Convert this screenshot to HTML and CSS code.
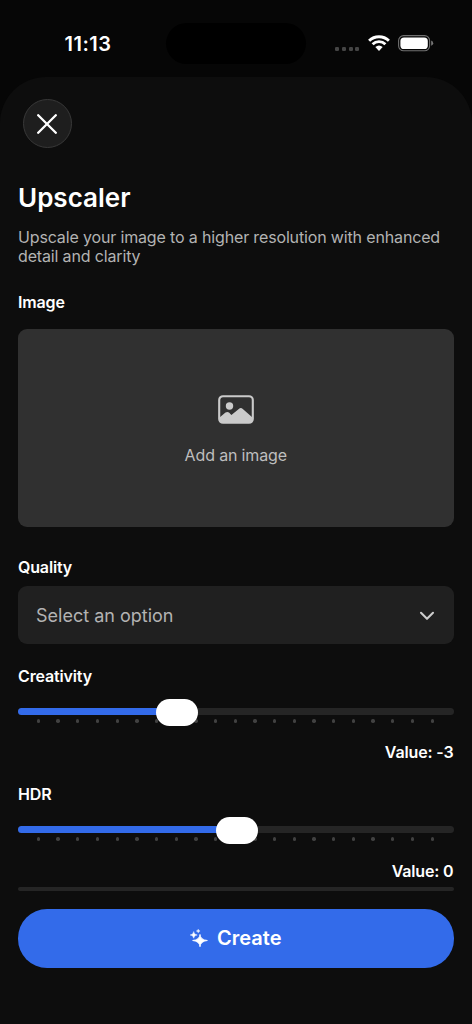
FILE: index.html
```html
<!DOCTYPE html>
<html lang="en">
<head>
<meta charset="utf-8">
<title>Upscaler</title>
<link rel="stylesheet" href="styles.css">
</head>
<body>
<div class="phone">
  <header class="status">
    <span class="time">11:13</span>
    <span class="island"></span>
    <div class="indicators">
      <span class="cell"><i></i><i></i><i></i><i></i></span>
      <svg class="wifi" width="22" height="16" viewBox="0 0 22 16">
        <g fill="none" stroke="#fff" stroke-width="2.9">
          <path d="M1.1 5.8 A14.1 14.1 0 0 1 20.9 5.8"/>
          <path d="M4.6 9.3 A9.1 9.1 0 0 1 17.4 9.3"/>
        </g>
        <path fill="#fff" d="M7.3 12.1 Q11 8.9 14.7 12.1 L11 15.9 Z"/>
      </svg>
      <svg class="battery" width="36" height="17" viewBox="0 0 36 17">
        <rect x=".6" y=".6" width="31" height="15.2" rx="5" fill="none" stroke="#707070" stroke-width="1.1"/>
        <rect x="2.4" y="2.4" width="27.4" height="11.6" rx="3.6" fill="#fff"/>
        <path d="M33.2 5.6 Q35.2 6.4 35.2 8.2 Q35.2 10 33.2 10.8Z" fill="#777"/>
      </svg>
    </div>
  </header>
  <main class="sheet">
    <button class="close" aria-label="Close">
      <svg width="20" height="20" viewBox="0 0 20 20"><path d="M1.2 1.2 18.8 18.8M18.8 1.2 1.2 18.8" fill="none" stroke="#fff" stroke-width="2.3" stroke-linecap="round"/></svg>
    </button>
    <h1 class="title">Upscaler</h1>
    <p class="description">Upscale your image to a higher resolution with enhanced detail and clarity</p>
    <span class="label image-label">Image</span>
    <button class="dropzone">
      <svg width="36" height="29" viewBox="0 0 36 29">
        <rect x="1.2" y="1.2" width="33.6" height="26.6" rx="3.8" fill="none" stroke="#cacaca" stroke-width="2.1"/>
        <circle cx="11.5" cy="11" r="3.7" fill="#cacaca"/>
        <path fill="#cacaca" d="M1.5 22.5 7.5 17.6Q9.3 16.3 11 17.6L13.4 19.9 20.8 13.9Q22.8 12.3 24.8 13.9L34.5 22.5V25Q34.5 28 31 28H5Q1.5 28 1.5 25Z"/>
      </svg>
      <span class="drop-text">Add an image</span>
    </button>
    <span class="label quality-label">Quality</span>
    <button class="select">
      <span class="select-text">Select an option</span>
      <svg width="16" height="10" viewBox="0 0 16 10"><path d="M2 1.8 8 7.8 14 1.8" fill="none" stroke="#ccc" stroke-width="2.1" stroke-linecap="round" stroke-linejoin="round"/></svg>
    </button>
    <span class="label creativity-label">Creativity</span>
    <div class="slider">
      <div class="track"><div class="fill" style="width:36.4%"></div></div>
      <div class="ticks"><i></i><i></i><i></i><i></i><i></i><i></i><i></i><i></i><i></i><i></i><i></i><i></i><i></i><i></i><i></i><i></i><i></i><i></i><i></i><i></i><i></i></div>
      <span class="thumb" style="left:36.45%"></span>
    </div>
    <span class="label value">Value: -3</span>
    <span class="label hdr-label">HDR</span>
    <div class="slider">
      <div class="track"><div class="fill" style="width:50%"></div></div>
      <div class="ticks"><i></i><i></i><i></i><i></i><i></i><i></i><i></i><i></i><i></i><i></i><i></i><i></i><i></i><i></i><i></i><i></i><i></i><i></i><i></i><i></i><i></i></div>
      <span class="thumb" style="left:50.25%"></span>
    </div>
    <span class="label value">Value: 0</span>
    <div class="divider"></div>
    <button class="create">
      <svg width="18" height="18" viewBox="0 0 18 18" fill="#fff">
        <path d="M10 5.4Q10.5 10.8 17.4 11.5Q10.5 12.2 10 17.8Q9.5 12.2 2.6 11.5Q9.5 10.8 10 5.4Z" stroke="#fff" stroke-width=".8"/>
        <path d="M3.7 2.6Q4 5.7 7.2 6Q4 6.3 3.7 9.2Q3.4 6.3 .2 6Q3.4 5.7 3.7 2.6Z" stroke="#fff" stroke-width=".5"/>
        <path d="M8.2 .2Q8.4 1.8 10.1 2Q8.4 2.2 8.2 3.8Q8 2.2 6.3 2Q8 1.8 8.2 .2Z" stroke="#fff" stroke-width=".4"/>
      </svg>
      <span class="create-text">Create</span>
    </button>
  </main>
</div>
</body>
</html>
```
FILE: styles.css
```css
* { box-sizing: border-box; }
body { margin: 0; background: #060606; font-family: Inter, sans-serif; color: #fff; }
button { border: 0; padding: 0; margin: 0; font: inherit; color: inherit; }
svg { display: block; flex: none; }
.phone { width: 472px; height: 1024px; display: flex; flex-direction: column; overflow: hidden; background: #060606; }

.status { height: 76.5px; flex: none; display: grid; grid-template-columns: 166px 140px 1fr; align-items: start; }
.time { padding: 32px 0 0 64.5px; font-size: 20px; line-height: 24px; font-weight: 600; letter-spacing: 0.5px; }
.island { height: 41px; margin-top: 23px; border-radius: 21px; background: #000; }
.indicators { display: flex; align-items: flex-start; padding: 35px 0 0 29px; }
.cell { display: flex; gap: 2.8px; padding-top: 11.5px; margin-right: 8.4px; }
.cell i { width: 4px; height: 4.5px; border-radius: 1.3px; background: #454545; }
.battery { margin-left: 8px; }

.sheet { flex: 1; display: flex; flex-direction: column; padding: 22.5px 18.5px 0 18px; border-radius: 46px 46px 0 0; background: #0d0d0d; }
.close { width: 49px; height: 49px; margin-left: 4.6px; display: flex; align-items: center; padding-left: 13.4px; border: 1px solid #383838; border-radius: 50%; background: #1e1e1e; }
.title { margin: 34px 0 0; font-size: 26px; line-height: 32px; font-weight: 600; }
.description { margin: 14px 0 0; font-size: 16px; line-height: 19.3px; letter-spacing: -0.15px; color: #b3b3b3; font-weight: 400; }
.label { font-size: 16px; line-height: 20px; font-weight: 600; letter-spacing: -0.15px; }
.image-label { margin-top: 25.1px; }
.dropzone { height: 197.5px; margin-top: 17.6px; display: flex; flex-direction: column; align-items: center; gap: 21px; padding-top: 65.5px; border-radius: 9px; background: #303030; }
.drop-text { font-size: 16px; line-height: 20px; letter-spacing: -0.15px; color: #bebebe; font-weight: 400; }
.quality-label { margin-top: 30.6px; }
.select { height: 58px; margin-top: 8.9px; display: flex; align-items: center; justify-content: space-between; padding: 1px 19px 0 18px; border-radius: 9px; background: #202020; }
.select-text { font-size: 18px; line-height: 24px; color: #b3b3b3; font-weight: 400; }
.creativity-label { margin-top: 22px; }

.slider { position: relative; height: 28px; margin-top: 12.5px; padding-top: 9.5px; }
.track { height: 7px; border-radius: 4px; background: #252525; overflow: hidden; }
.fill { height: 100%; background: #336bea; }
.ticks { display: flex; justify-content: space-between; padding: 4px 19.5px 0 18.8px; }
.ticks i { width: 3.3px; height: 3.3px; border-radius: 50%; background: #414141; }
.thumb { position: absolute; top: 0; width: 42px; height: 27px; margin-left: -21px; border-radius: 13.5px; background: #fff; }
.value { align-self: flex-end; margin-top: 15.7px; }
.hdr-label { margin-top: 21.9px; }
.divider { height: 4.5px; margin-top: 6.2px; border-radius: 2px; background: #252525; }
.create { height: 58.5px; margin-top: 18px; display: flex; align-items: center; justify-content: center; gap: 9px; border-radius: 29px; background: #336bea; }
.create-text { font-size: 20px; line-height: 24px; font-weight: 600; }
```
